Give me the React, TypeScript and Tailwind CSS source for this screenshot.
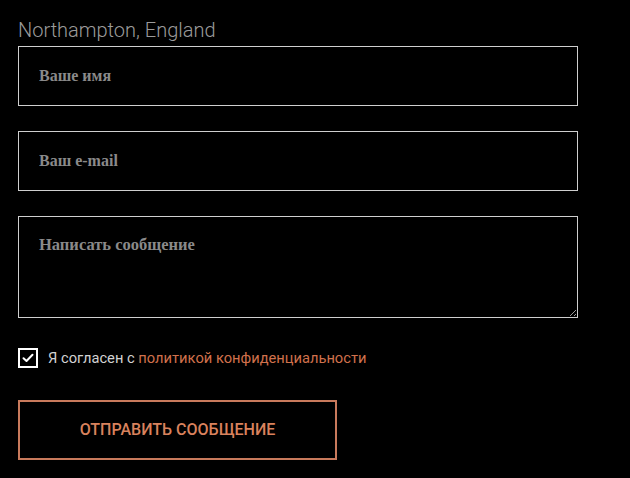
import React from "react";

export default function App() {
  return (
    <div className="min-h-[478px] w-[630px] bg-black pl-[18px] pt-[18px]" style={{ fontFamily: "Roboto, 'Liberation Sans', sans-serif" }}>
      <div className="h-6 text-[20px] font-light leading-6 text-[#9b9b9b]">Northampton, England</div>
      <input
        className="mt-1 block h-[60px] w-[560px] border border-[#cfcfcf] bg-black px-5 text-[16px] font-bold text-[#8a8a8a] outline-none placeholder:text-[#8a8a8a]"
        style={{ fontFamily: "'Liberation Serif', serif" }}
        placeholder="Ваше имя"
      />
      <input
        className="mt-[25px] block h-[60px] w-[560px] border border-[#cfcfcf] bg-black px-5 text-[16px] font-bold text-[#8a8a8a] outline-none placeholder:text-[#8a8a8a]"
        style={{ fontFamily: "'Liberation Serif', serif" }}
        placeholder="Ваш e-mail"
      />
      <textarea
        className="mt-[25px] block h-[102px] w-[560px] border border-[#cfcfcf] bg-black px-5 pt-4 text-[16.5px] font-bold text-[#8a8a8a] outline-none placeholder:text-[#8a8a8a] [color-scheme:dark]"
        style={{ fontFamily: "'Liberation Serif', serif" }}
        placeholder="Написать сообщение"
      />
      <div className="mt-[30px] flex h-5 items-center">
        <div className="flex h-5 w-5 items-center justify-center border-2 border-white">
          <svg width="12" height="10" viewBox="0 0 12 10" fill="none">
            <path d="M1.5 5.2 L4.5 8 L10.5 1.8" stroke="#fff" strokeWidth="2" strokeLinecap="round" strokeLinejoin="round" />
          </svg>
        </div>
        <span className="ml-[10px] text-[14.7px] text-[#d2d2d2]">
          Я согласен с <span className="text-[#d0714c]">политикой конфиденциальности</span>
        </span>
      </div>
      <button className="mt-8 flex h-[60px] w-[319px] items-center justify-center border-2 border-[#c97a5c] bg-black text-[16px] font-medium uppercase text-[#d9825d]">
        Отправить сообщение
      </button>
    </div>
  );
}
